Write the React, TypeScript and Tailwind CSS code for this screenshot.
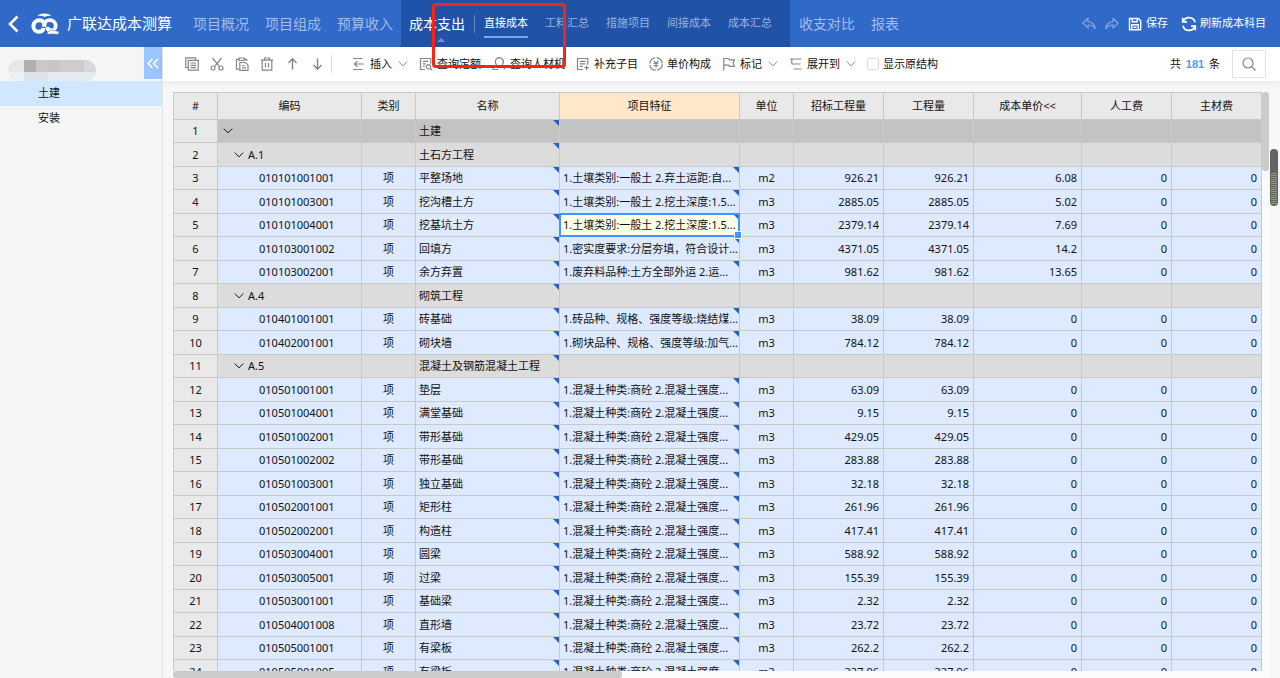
import type { ReactNode } from "react";
import clsx from "clsx";

type RowKind = "root" | "group" | "item";

interface CostRow {
  kind: RowKind;
  code: string;
  name: string;
  feature?: string;
  unit?: string;
  quantity?: string;
  price?: string;
}

const CONCRETE = "1.混凝土种类:商砼 2.混凝土强度...";

const item = (
  code: string,
  name: string,
  quantity: string,
  feature: string = CONCRETE,
  price: string = "0",
  unit: string = "m3"
): CostRow => ({ kind: "item", code, name, quantity, feature, price, unit });

const rows: CostRow[] = [
  { kind: "root", code: "", name: "土建" },
  { kind: "group", code: "A.1", name: "土石方工程" },
  item("010101001001", "平整场地", "926.21", "1.土壤类别:一般土 2.弃土运距:自...", "6.08", "m2"),
  item("010101003001", "挖沟槽土方", "2885.05", "1.土壤类别:一般土 2.挖土深度:1.5...", "5.02"),
  item("010101004001", "挖基坑土方", "2379.14", "1.土壤类别:一般土 2.挖土深度:1.5...", "7.69"),
  item("010103001002", "回填方", "4371.05", "1.密实度要求:分层夯填，符合设计...", "14.2"),
  item("010103002001", "余方弃置", "981.62", "1.废弃料品种:土方全部外运 2.运...", "13.65"),
  { kind: "group", code: "A.4", name: "砌筑工程" },
  item("010401001001", "砖基础", "38.09", "1.砖品种、规格、强度等级:烧结煤..."),
  item("010402001001", "砌块墙", "784.12", "1.砌块品种、规格、强度等级:加气..."),
  { kind: "group", code: "A.5", name: "混凝土及钢筋混凝土工程" },
  item("010501001001", "垫层", "63.09"),
  item("010501004001", "满堂基础", "9.15"),
  item("010501002001", "带形基础", "429.05"),
  item("010501002002", "带形基础", "283.88"),
  item("010501003001", "独立基础", "32.18"),
  item("010502001001", "矩形柱", "261.96"),
  item("010502002001", "构造柱", "417.41"),
  item("010503004001", "圆梁", "588.92"),
  item("010503005001", "过梁", "155.39"),
  item("010503001001", "基础梁", "2.32"),
  item("010504001008", "直形墙", "23.72"),
  item("010505001001", "有梁板", "262.2"),
  item("010505001005", "有梁板", "327.96"),
];

const columns = [
  { title: "#", width: "w-11" },
  { title: "编码", width: "w-36" },
  { title: "类别", width: "w-[54px]" },
  { title: "名称", width: "w-36" },
  { title: "项目特征", width: "w-[180px]" },
  { title: "单位", width: "w-[54px]" },
  { title: "招标工程量", width: "w-[90px]" },
  { title: "工程量", width: "w-[90px]" },
  { title: "成本单价<<", width: "w-[108px]" },
  { title: "人工费", width: "w-[90px]" },
  { title: "主材费", width: "w-[90px]" },
];

const SELECTED_ROW = 4;

/* Icons */
function Icon({ size = 14, children }: { size?: number; children: ReactNode }) {
  return (
    <svg
      width={size}
      height={size}
      viewBox="0 0 14 14"
      fill="none"
      stroke="currentColor"
      strokeWidth="1.2"
      className="shrink-0"
      aria-hidden="true"
    >
      {children}
    </svg>
  );
}

const CopyIcon = () => (
  <Icon>
    <path d="M3 10.5H.8V.8h9.7V3M3.3 3.3h9.9v9.9H3.3zM5.5 6h5.5M5.5 8.3h5.5M5.5 10.6h5.5" />
  </Icon>
);

const CutIcon = () => (
  <Icon>
    <path d="M2.5 1l7 8.6M11.5 1l-7 8.6" />
    <circle cx="3" cy="11" r="2" />
    <circle cx="11" cy="11" r="2" />
  </Icon>
);

const PasteIcon = () => (
  <Icon>
    <path d="M4 12.2H1.5V2.3H4M9.5 2.3h2.2V4M4 1h5.3v2.5H4zM4.8 5.5h5.7l2.5 2.4v5.4H4.8zM7 8.5h2.5M7 10.8h4" />
  </Icon>
);

const TrashIcon = () => (
  <Icon>
    <path d="M.8 3.2h12.4M4.5 3V1h5v2M2.2 3.2v10h9.6v-10M5.5 6v4.5M8.5 6v4.5" />
  </Icon>
);

const UpIcon = () => (
  <Icon>
    <path d="M7.5 12.5V1.8M3.5 6l4-4.2 4 4.2" strokeWidth="1.4" />
  </Icon>
);

const DownIcon = () => (
  <Icon>
    <path d="M7.5 1.5v10.7M3.5 8l4 4.2 4-4.2" strokeWidth="1.4" />
  </Icon>
);

const InsertIcon = () => (
  <Icon>
    <path d="M1 1.5h9.5M1 12.5h9.5M2.5 7H12M5.3 4.3L2.5 7l2.8 2.7" />
  </Icon>
);

const QueryIcon = () => (
  <Icon>
    <path d="M6 12.5H1.5v-11h10.3v5.3M3.8 4.3h5.8M3.8 6.8h3M3.8 9.3h2" />
    <circle cx="9.5" cy="9.8" r="2.2" />
    <path d="M11.2 11.4l2 2" />
  </Icon>
);

const PeopleIcon = () => (
  <Icon>
    <path d="M4.6 7.6A4 4 0 1 1 10 7.7M.8 12.5c.2-2.4 1.7-4 4-4.6M.8 12.5h5.5M10 7.8l3 4.7" />
  </Icon>
);

const AddItemIcon = () => (
  <Icon>
    <path d="M7 12.5H1.5v-11h10.3v6.3M3.8 4.3h5.8M3.8 6.8h5.8M3.8 9.3h3M8.3 10.7H13M10.6 8.4V13" />
  </Icon>
);

const PriceIcon = () => (
  <Icon>
    <circle cx="7" cy="7" r="6.2" strokeDasharray="8.2 1.5" />
    <path d="M4.7 3.6L7 6.3l2.3-2.7M4.6 6.5h4.8M4.6 8.5h4.8M7 6.3v4.4" />
  </Icon>
);

const FlagIcon = () => (
  <Icon>
    <path d="M1.8 13.5V1.5h4.8l1 1.3h4.9l-1.5 3.3 1.5 3.2H7.4l-1-1.2H1.8" />
  </Icon>
);

const ExpandIcon = () => (
  <Icon>
    <path d="M1 2h11.5M4.5 7h7M4.5 12h8M2.8 2v4.5c0 .4.3.5.7.5h1" />
  </Icon>
);

const ChevronIcon = () => (
  <svg width="10" height="6" viewBox="0 0 10 6" fill="none" stroke="currentColor" className="shrink-0" aria-hidden="true">
    <path d="M.8.6L5 4.9 9.2.6" />
  </svg>
);

const UndoIcon = () => (
  <Icon>
    <path d="M6 1.5L.8 6.2 6 10.8V8c3.3-.1 5.6 1.2 7.2 4-.4-4-2.8-7-7.2-7.3z" />
  </Icon>
);

const RedoIcon = () => (
  <Icon>
    <path d="M8 1.5l5.2 4.7L8 10.8V8C4.7 7.9 2.4 9.2.8 12c.4-4 2.8-7 7.2-7.3z" />
  </Icon>
);

const SaveIcon = () => (
  <Icon>
    <path d="M1.5 1.5h8.8l2.4 2.4v8.8H1.5zM4.2 1.5v3.2h5V1.5M3.8 12.7V7.8h6.4v4.9M5.5 10.2h3" strokeWidth="1.4" />
  </Icon>
);

const RefreshIcon = () => (
  <Icon size={16}>
    <path d="M1.5 1.5v3.7h3.7M1.8 5A5.5 5.5 0 0 1 12.3 5.5M12.5 12.5V8.8H8.8M12.2 9A5.5 5.5 0 0 1 1.7 8.5" strokeWidth="1.5" />
  </Icon>
);

const SearchIcon = () => (
  <Icon>
    <circle cx="6" cy="6" r="5" />
    <path d="M9.7 9.7l3.8 3.8" />
  </Icon>
);

function Logo() {
  return (
    <svg width="28" height="22" viewBox="0 0 28 22" fill="none" stroke="#fff" aria-hidden="true">
      <path d="M6.5 3C9.5-.2 17-.2 20.5 3c-2.6-.4-4.6-.2-6.6 1-2.2-1.2-4.6-1.4-7.4-1z" fill="#fff" stroke="none" />
      <path d="M13.6 13.5C14 9.5 11.500 7.200 8.500 7.200 5 7.200 2.400 9.800 2.400 13s2.400 5.800 5.400 5.800c2.600 0 4.400-1.700 4.600-4" strokeWidth="4" />
      <path d="M13 13.500c0-4 2.400-6.300 5.700-6.300 3.500 0 6 2.500 6 5.500 0 2.800-1.900 4.800-4.500 4.800-2.300 0-3.800-1.500-4-3.500" strokeWidth="3.800" />
      <path d="M15.500 20.300c2.500-3 5.500-3.600 8-2.800 1.600.5 2.800 1 4.300.8v2.700c-1.600.6-3 .3-4.600.1-2.700-.4-5 1-7.700-.8z" fill="#fff" stroke="#3069c8" strokeWidth=".6" />
    </svg>
  );
}

/* Header */
const navLink = "text-sm text-[#a0bdec] whitespace-nowrap";

function Header() {
  return (
    <header className="flex h-[47px] shrink-0 items-stretch bg-[#3069c8]">
      <div className="flex items-center pl-2">
        <button type="button" aria-label="返回" className="text-white">
          <svg width="11" height="18" viewBox="0 0 11 18" fill="none" stroke="currentColor" strokeWidth="2.6">
            <path d="M9.5 1.5L2 9l7.5 7.5" />
          </svg>
        </button>
        <div className="ml-3 flex items-center gap-2">
          <Logo />
          <h1 className="text-[15px] whitespace-nowrap text-white">广联达成本测算</h1>
        </div>
      </div>

      <nav className="flex items-stretch">
        <div className="flex items-center gap-4 pr-2 pl-[21px]">
          <a href="#overview" className={navLink}>项目概况</a>
          <a href="#structure" className={navLink}>项目组成</a>
          <a href="#budget" className={navLink}>预算收入</a>
        </div>
        <div className="flex items-center bg-[#2052a8] pr-[18px] pl-2">
          <a href="#cost" className="relative text-sm whitespace-nowrap text-white">
            成本支出
            <span className="absolute -bottom-2 left-1/2 border-x-4 border-b-4 border-x-transparent border-b-[#7394cb]" />
          </a>
          <span className="mx-[9px] h-[18px] w-px bg-[#6386c2]" />
          <div className="flex items-center gap-[17px] text-[11px] whitespace-nowrap text-[#9bb2da]">
            <a href="#direct" className="relative text-white">
              直接成本
              <span className="absolute inset-x-0 -bottom-1.5 h-0.5 bg-[#74acf4]" />
            </a>
            <a href="#materials">工料汇总</a>
            <a href="#measures">措施项目</a>
            <a href="#indirect">间接成本</a>
            <a href="#summary">成本汇总</a>
          </div>
        </div>
        <div className="flex items-center gap-4 pl-[9px]">
          <a href="#compare" className={navLink}>收支对比</a>
          <a href="#report" className={navLink}>报表</a>
        </div>
      </nav>

      <div className="ml-auto flex items-center gap-[9px] pr-[14px] text-[11px] whitespace-nowrap text-white">
        <button type="button" aria-label="撤销" className="text-[#84a7e0]"><UndoIcon /></button>
        <button type="button" aria-label="重做" className="text-[#84a7e0]"><RedoIcon /></button>
        <button type="button" className="flex items-center gap-1"><SaveIcon />保存</button>
        <button type="button" className="ml-1 flex items-center gap-[3px]"><RefreshIcon />刷新成本科目</button>
      </div>
    </header>
  );
}

/* Sidebar */
function Sidebar() {
  return (
    <aside className="relative w-[163px] shrink-0 border-r border-[#e6e6e6] bg-[#f5f5f5] text-[11px]">
      <div className="flex h-[34px] items-end pl-2">
        <div className="flex h-[21px] w-[88px] flex-col overflow-hidden rounded-[10px] bg-[#e9ebee]">
          <div className="flex h-3">
            <span className="w-4 bg-[#e9e6e5]" />
            <span className="w-3 bg-[#b0afb2]" />
            <span className="w-3 bg-[#cac9c8]" />
            <span className="w-3 bg-[#c8c5c9]" />
            <span className="w-6 bg-[#cfcccf]" />
            <span className="w-3 bg-[#d5d9dc]" />
          </div>
          <div className="flex h-[9px]">
            <span className="w-4 bg-[#edf0f3]" />
            <span className="w-6 bg-[#dde2ea]" />
            <span className="w-12 bg-[#e5e9f0]" />
          </div>
        </div>
      </div>
      <button
        type="button"
        aria-label="收起"
        className="absolute top-0 right-0 flex h-8 w-[18px] items-center justify-center bg-[#9bc5fd] text-white"
      >
        <svg width="12" height="11" viewBox="0 0 12 11" fill="none" stroke="currentColor" strokeWidth="1.5">
          <path d="M5.5 1L1 5.5 5.5 10M11 1L6.5 5.5 11 10" />
        </svg>
      </button>
      <ul>
        <li><a href="#civil" className="flex h-[25px] items-center bg-[#d0e8ff] pl-[38px]">土建</a></li>
        <li><a href="#install" className="flex h-[25px] items-center pl-[38px]">安装</a></li>
      </ul>
    </aside>
  );
}

/* Toolbar */
function ToolButton({ icon, label, menu }: { icon: ReactNode; label: string; menu?: boolean }) {
  return (
    <button type="button" className="flex items-center gap-1 text-[#858585]">
      {icon}
      <span className="text-[#111]">{label}</span>
      {menu && <span className="ml-0.5"><ChevronIcon /></span>}
    </button>
  );
}

function Toolbar() {
  return (
    <div className="z-10 flex h-[34px] shrink-0 items-center bg-white pr-[14px] pl-[22px] text-[11px] whitespace-nowrap shadow-[0_2px_6px_rgba(0,0,0,0.06)]">
      <div className="flex items-center gap-[11px] text-[#858585]">
        <button type="button" aria-label="复制"><CopyIcon /></button>
        <button type="button" aria-label="剪切"><CutIcon /></button>
        <button type="button" aria-label="粘贴"><PasteIcon /></button>
        <button type="button" aria-label="删除"><TrashIcon /></button>
        <button type="button" aria-label="上移"><UpIcon /></button>
        <button type="button" aria-label="下移"><DownIcon /></button>
      </div>
      <span className="mr-5 ml-[7px] h-[18px] w-px bg-[#dcdcdc]" />
      <div className="flex items-center gap-[11px]">
        <ToolButton icon={<InsertIcon />} label="插入" menu />
        <ToolButton icon={<QueryIcon />} label="查询定额" />
        <ToolButton icon={<PeopleIcon />} label="查询人材机" />
        <ToolButton icon={<AddItemIcon />} label="补充子目" />
        <ToolButton icon={<PriceIcon />} label="单价构成" />
        <ToolButton icon={<FlagIcon />} label="标记" menu />
        <ToolButton icon={<ExpandIcon />} label="展开到" menu />
        <label className="flex items-center gap-1 text-[#111]">
          <input type="checkbox" className="h-3 w-3 appearance-none rounded-xs border border-[#dcdcdc] bg-white" />
          显示原结构
        </label>
      </div>
      <p className="ml-auto text-[#111]">
        共 <b className="mx-0.5 font-['Liberation_Sans'] text-[#4a9bff]">181</b> 条
      </p>
      <button
        type="button"
        aria-label="搜索"
        className="ml-3 flex h-7 w-[34px] items-center justify-center border border-[#e2e2e2] text-[#858585]"
      >
        <SearchIcon />
      </button>
    </div>
  );
}

/* Grid */
function NoteMark() {
  return (
    <svg width="6" height="6" viewBox="0 0 6 6" className="absolute top-0 right-0" aria-hidden="true">
      <path d="M0 0h6v6z" fill="#2860bf" />
    </svg>
  );
}

const cell = "relative border-r border-b border-[#c9c9c9] p-0 leading-4 whitespace-nowrap";

function GridRow({ row, index }: { row: CostRow; index: number }) {
  const isItem = row.kind === "item";
  const selected = index === SELECTED_ROW;

  return (
    <tr
      className={clsx(
        "odd:h-[23px] even:h-6",
        row.kind === "root" && "bg-[#c3c3c3]",
        row.kind === "group" && "bg-[#dcdcdc]",
        isItem && "bg-[#deeaff]"
      )}
    >
      <th scope="row" className={clsx(cell, "bg-[#e9e9e9] text-center font-normal")}>{index + 1}</th>
      <td className={cell}>
        {isItem ? (
          <span className="pl-[41px]">{row.code}</span>
        ) : (
          <span className={clsx("flex items-center gap-1", row.kind === "root" ? "pl-[5px]" : "pl-4")}>
            <ChevronIcon />
            {row.code}
          </span>
        )}
      </td>
      <td className={clsx(cell, "text-center")}>{isItem && "项"}</td>
      <td className={clsx(cell, "pl-[3px]")}>
        {row.name}
        <NoteMark />
      </td>
      <td className={clsx(cell, "pl-[3px]", selected && "bg-[#ffffe8]")}>
        {row.feature}
        {isItem && <NoteMark />}
        {selected && (
          <span className="absolute -inset-px z-10 border-2 border-[#4096ff]">
            <span className="absolute -right-1 -bottom-1 h-2 w-2 border border-white bg-[#4096ff]" />
          </span>
        )}
      </td>
      <td className={clsx(cell, "text-center")}>{row.unit}</td>
      <td className={clsx(cell, "pr-1 text-right")}>{row.quantity}</td>
      <td className={clsx(cell, "pr-1 text-right")}>{row.quantity}</td>
      <td className={clsx(cell, "pr-1 text-right")}>{row.price}</td>
      <td className={clsx(cell, "pr-1 text-right")}>{isItem && "0"}</td>
      <td className={clsx(cell, "pr-1 text-right")}>{isItem && "0"}</td>
    </tr>
  );
}

function CostGrid() {
  return (
    <div className="flex min-h-0 flex-1 flex-col bg-[#f7f7f7] pt-[11px] pr-[11px] pl-[10px]">
      <div className="flex min-h-0 flex-1 bg-[#fcfcfc]">
        <div className="min-w-0 flex-1 overflow-hidden">
          <table className="w-full table-fixed border-separate border-spacing-0 border-t border-l border-[#c9c9c9] text-[11px] text-[#111]">
            <thead>
              <tr className="h-[27px] bg-[#e9e9e9]">
                {columns.map((column) => (
                  <th
                    key={column.title}
                    scope="col"
                    className={clsx(cell, column.width, "font-normal", column.title === "项目特征" && "bg-[#ffe7c9]")}
                  >
                    {column.title}
                  </th>
                ))}
              </tr>
            </thead>
            <tbody>
              {rows.map((row, index) => (
                <GridRow key={row.code + index} row={row} index={index} />
              ))}
            </tbody>
          </table>
        </div>
        <div className="w-[7px]">
          <div className="h-[79px] rounded-[3px] bg-[#cbcbcb]" />
        </div>
      </div>
      <div className="h-[7px] shrink-0 bg-[#fcfcfc]">
        <div className="h-full w-[41%] rounded-[3px] bg-[#cbcbcb]" />
      </div>
    </div>
  );
}

export default function App() {
  return (
    <div className="relative flex h-screen flex-col overflow-hidden bg-[#f7f7f7] font-['Noto_Sans','Noto_Sans_CJK_SC',sans-serif] text-[#111]">
      <Header />
      <div className="flex min-h-0 flex-1">
        <Sidebar />
        <main className="flex min-w-0 flex-1 flex-col">
          <Toolbar />
          <CostGrid />
        </main>
      </div>

      {/* Highlight frame */}
      <div className="pointer-events-none absolute top-[3px] left-[432px] z-20 h-[65px] w-[134px] rounded-sm border-3 border-[#fb2412]" />

      {/* Level meter */}
      <div className="absolute top-[149px] right-0.5 z-20 flex h-[57px] w-2 flex-col justify-end rounded-full bg-[#636363] px-px pb-0.5">
        <div className="h-[31px] bg-[repeating-linear-gradient(to_bottom,#2fd45a_0px,#2fd45a_1px,#636363_1px,#636363_2px)]" />
      </div>
    </div>
  );
}
